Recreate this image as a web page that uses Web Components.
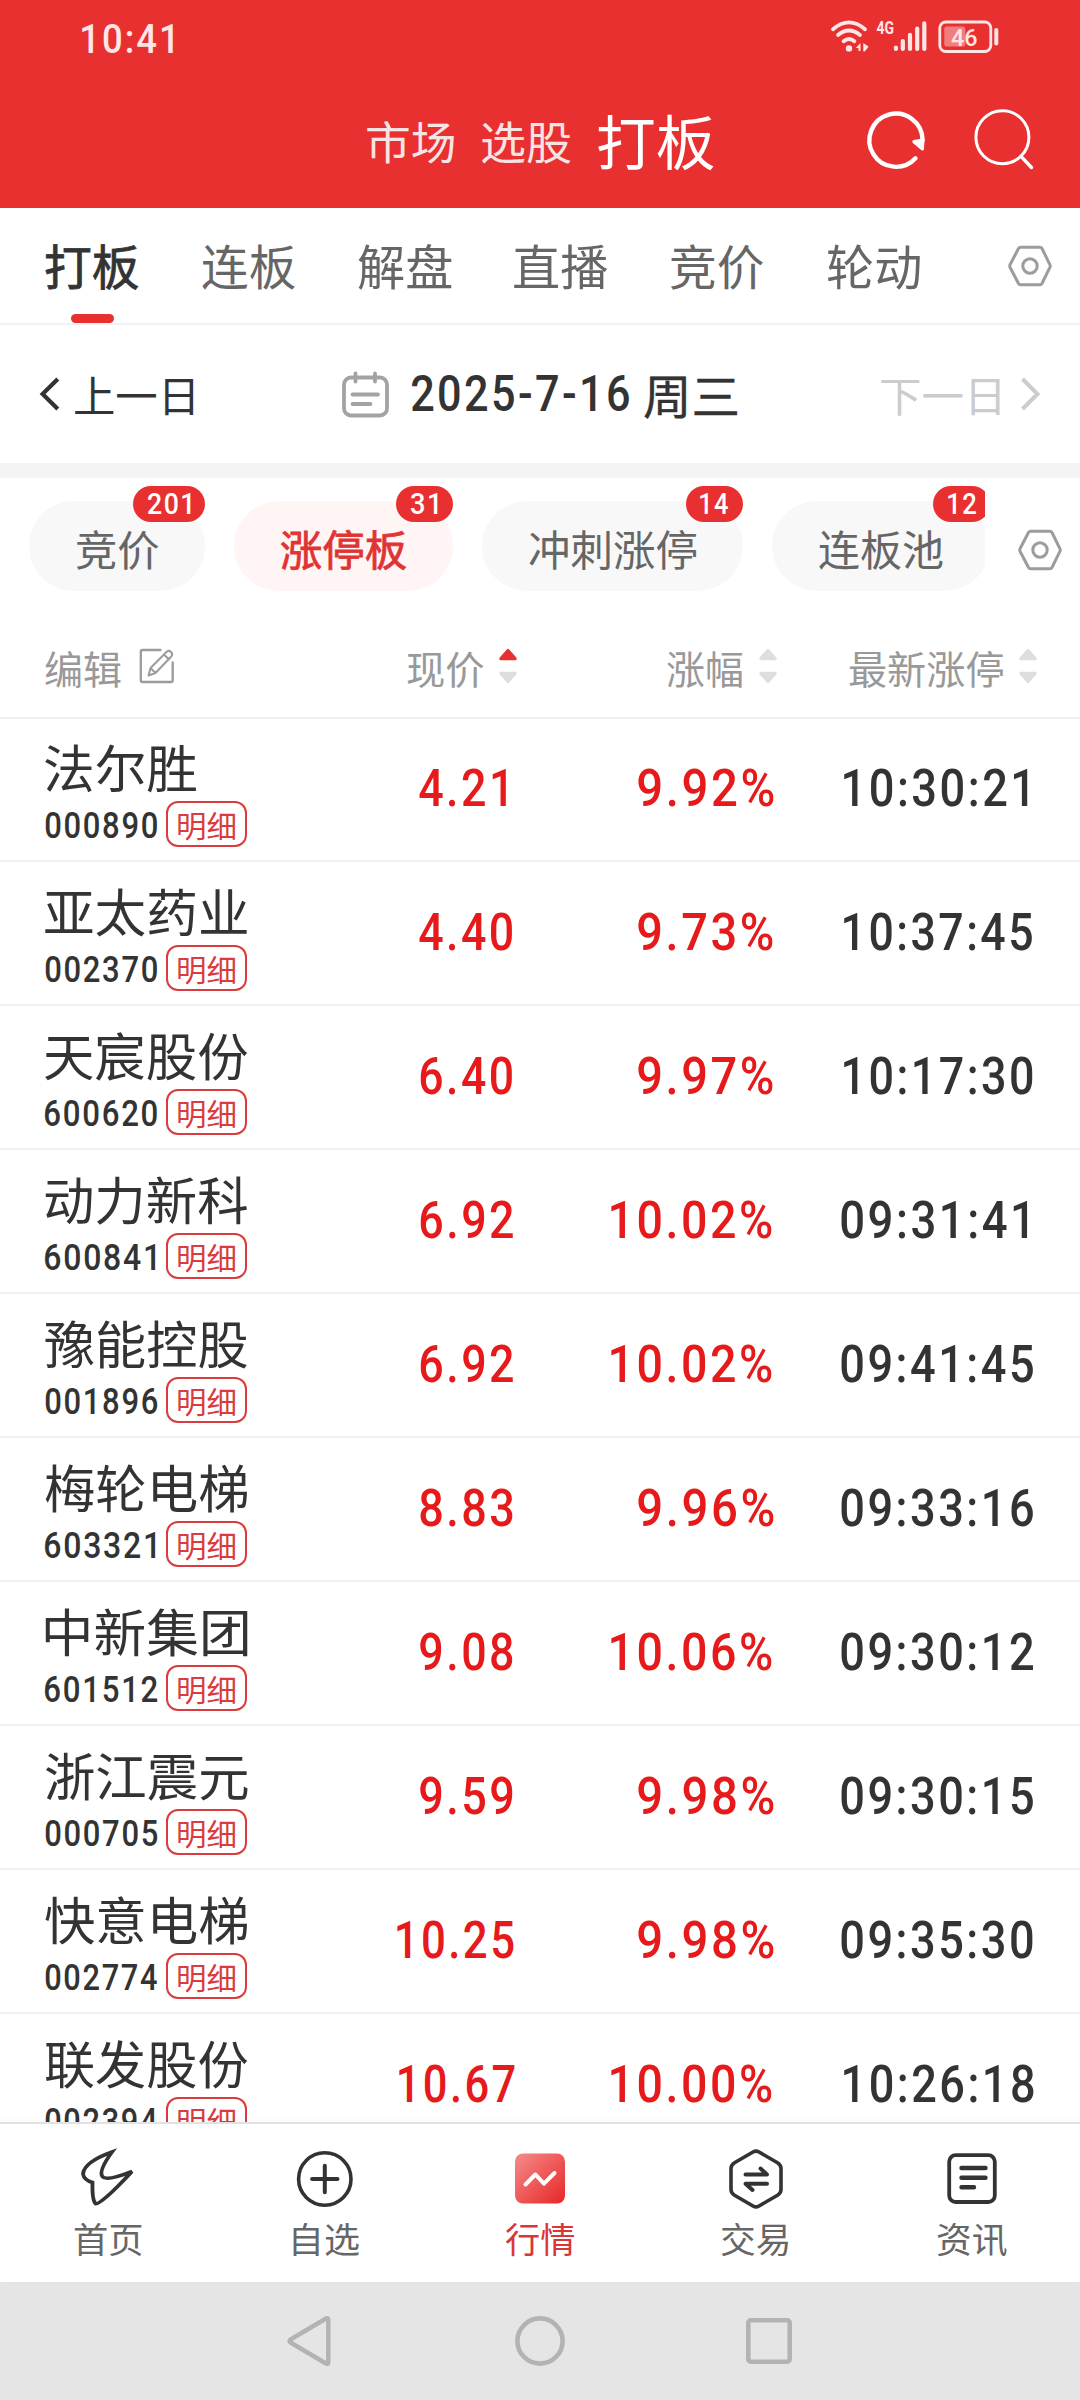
<!DOCTYPE html>
<html lang="zh-CN">
<head>
<meta charset="utf-8">
<title>打板</title>
<style>
  body { margin: 0; width: 1080px; height: 2400px; overflow: hidden; background: #fff; color: #333;
    font-family: Roboto, "Noto Sans CJK SC", sans-serif; }
  market-app { height: 2400px; }
</style>
</head>
<body>
<market-app></market-app>
<script>
const base = '*{box-sizing:border-box} svg{display:block;flex:none}';

function define(name, css, render) {
  customElements.define(name, class extends HTMLElement {
    connectedCallback() {
      if (this.shadowRoot) return;
      const root = this.attachShadow({ mode: 'open' });
      root.innerHTML = `<style>${base}${css}</style>` + render(this);
    }
  });
}

/* A single line of text whose visible ink fills exactly the width given by "w".
   Numbers are tracked out a little so that their figures stay narrow. */
const pen = document.createElement('canvas').getContext('2d');
customElements.define('fit-text', class extends HTMLElement {
  connectedCallback() {
    if (this.shadowRoot) return;
    const w = +this.getAttribute('w'), s = +this.getAttribute('s');
    const weight = this.getAttribute('wt') || 400;
    const text = this.textContent;
    const cjk = /[\u4e00-\u9fff]/.test(text);
    const track = cjk ? 0 : s * 0.055;
    pen.font = `${weight} ${s}px Roboto, "Noto Sans CJK SC", sans-serif`;
    const m = pen.measureText(text);
    const k = w / (m.actualBoundingBoxLeft + m.actualBoundingBoxRight + track * (text.length - 1));
    const x = m.actualBoundingBoxLeft * k, y = s * (cjk ? 0.04 : 0.014);
    this.attachShadow({ mode: 'open' }).innerHTML = `<style>
      :host{display:block;flex:none;width:${w}px;height:${s}px;line-height:${s}px;font-size:${s}px;font-weight:${weight}}
      :host([firm]){-webkit-text-stroke:.8px currentColor}
      span{display:inline-block;white-space:nowrap;letter-spacing:${track}px;transform-origin:0 0;transform:translate(${x}px,${y}px) scaleX(${k})}
      </style><span><slot></slot></span>`;
  }
});

define('status-bar', `:host{display:flex;align-items:center;height:77px;padding-left:82px;background:#e83030;color:#ffe6e6}
  svg{margin-left:auto}`, () => `
  <fit-text w="91.5" s="40.5" wt="500">10:41</fit-text>
  <svg width="250" height="77" viewBox="830 0 250 77" fill="none" stroke="#ffe6e6" stroke-linecap="round">
    <path d="M833 29.2Q849 15.5 865 29.2" stroke-width="3.8"/>
    <path d="M838 35Q849 26 860 35" stroke-width="3.8"/>
    <path d="M843.6 41.3Q849 36.8 854.4 41.3" stroke-width="3.8"/>
    <circle cx="849" cy="48.4" r="3.2" fill="#ffe6e6" stroke="none"/>
    <path d="M860.500 43v8h-2v-3h-2.700zM863.300 43l5.400 3.800-4 4.700h-1.400z" fill="#ffe6e6" stroke="none"/>
    <text x="876.5" y="34.4" textLength="17.5" lengthAdjust="spacingAndGlyphs" font-family="Roboto" font-weight="700" font-size="18.5" fill="#ffe6e6" stroke="none">4G</text>
    <path d="M895.9 47.6V49M902.8 41V49M910 34.8V49M917.2 28.5V49M924.3 23.3V49" stroke-width="4.2"/>
    <rect x="939.8" y="22" width="51" height="29.5" rx="6" stroke-width="2.8"/>
    <rect x="944.3" y="26.5" width="21" height="20" rx="2.5" fill="#fff" fill-opacity=".38" stroke="none"/>
    <path d="M996.3 30v13.5" stroke-width="4"/>
    <text x="951" y="46" textLength="26.500" lengthAdjust="spacingAndGlyphs" font-family="Roboto" font-weight="500" font-size="24.5" fill="#ffe6e6" stroke="none">46</text>
  </svg>`);

define('app-header', `:host{display:flex;align-items:center;height:131px;padding-left:366.500px;background:#e83030;color:#f7e3e3}
  .on{color:#fff;margin-left:-1px} nav{display:flex;align-items:center;gap:28px} svg{margin-left:auto}`, () => `
  <nav><fit-text w="87.5" s="45">市场</fit-text><fit-text w="89" s="45">选股</fit-text><fit-text class="on" w="116.5" s="59">打板</fit-text></nav>
  <svg width="220" height="131" viewBox="860 77 220 131" fill="none" stroke="#fff" stroke-linecap="round">
    <path d="M915.500 158.300A26.600 26.600 0 1 1 922.600 140" stroke-width="4.4"/>
    <path d="M914 141.600L922.800 140.200 922.300 148.800Z" fill="#fff" stroke-width="3.4" stroke-linejoin="round"/>
    <circle cx="1002.4" cy="137.3" r="26.5" stroke-width="3"/><path d="M1021 156.3L1031.500 167.500" stroke-width="3.4"/>
  </svg>`);

define('hex-icon', `:host{display:block;flex:none;width:44px;height:42px}`, () => `
  <svg width="44" height="42" viewBox="0 0 44 42" fill="none" stroke="#9c9c9c" stroke-width="3" stroke-linejoin="round">
  <path d="M12.5 2.3h19.5Q33.3 2.3 34 3.5L42 19.8Q42.5 21 42 22.2L34 38.5Q33.3 39.7 32 39.7H12.5Q11.2 39.7 10.5 38.5L2 22.2Q1.500 21 2 19.800L10.500 3.500Q11.200 2.300 12.500 2.300Z"/><circle cx="22" cy="21" r="7.200"/></svg>`);

define('main-tabs', `:host{display:flex;height:117px;padding:29px 28.500px 0 45px;border-bottom:2px solid #f2f2f2;color:#666}
  nav{display:flex;gap:63px} nav>*{height:60px;display:flex;align-items:center} div{color:#333;position:relative}
  i{position:absolute;left:25.500px;top:77px;width:43px;height:9px;border-radius:5px;background:#e83030}
  hex-icon{margin:8px 0 0 auto}`, () => `
  <nav><div><fit-text firm w="93.500" s="48">打板</fit-text><i></i></div>${['连板','解盘','直播','竞价','轮动'].map(t => `<section><fit-text w="93.300" s="48">${t}</fit-text></section>`).join('')}</nav>
  <hex-icon></hex-icon>`);

define('date-bar', `:host{display:flex;align-items:center;justify-content:space-between;height:153px;padding:0 39px;border-bottom:15px solid #f4f4f4}
  div{display:flex;align-items:center} .next{color:#ccc} .prev fit-text,.next fit-text{margin-top:3px}`, () => `
  <div class="prev"><svg width="35.500" height="36" viewBox="0 0 35.500 36" fill="none" stroke="#333" stroke-width="4.200"><path d="M18.800 3L3.600 18 18.800 33"/></svg>
  <fit-text w="118.500" s="41.500">上一日</fit-text></div>
  <div style="margin-left:5px"><svg width="47" height="48" viewBox="0 0 47 48" fill="none" stroke="#a3a3a3" stroke-width="3.800" stroke-linecap="round"><rect x="2" y="7.500" width="43" height="38" rx="7"/><path d="M13.500 3.500v8M33 3.500v8M10.500 24.500h25.500M10.500 34h18"/></svg>
  <fit-text style="margin-left:22px" w="218.500" s="49.500" wt="500">2025-7-16</fit-text><fit-text firm style="margin-left:15px;margin-top:2px;-webkit-text-stroke-width:.4px" w="93" s="47">周三</fit-text></div>
  <div class="next"><fit-text w="119" s="41.500">下一日</fit-text><svg style="margin-left:19px" width="22" height="36" viewBox="0 0 22 36" fill="none" stroke="#ccc" stroke-width="4"><path d="M3.500 3L18.500 18 3.500 33"/></svg></div>`);

define('filter-pill', `:host{display:flex;flex:none;position:relative;height:90px;padding:7px 47px 0;border-radius:45px;background:#f8f8f8;color:#666;align-items:center}
  :host([active]){background:#fff5f4;color:#e03434}
  b{position:absolute;right:0;top:-15px;height:36px;border-radius:18px;background:#e83030;color:#fff;display:flex;align-items:center;justify-content:center}`, e => `
  <fit-text ${e.hasAttribute('active') ? 'firm' : ''} w="${e.getAttribute('tw')}" s="42">${e.getAttribute('label')}</fit-text>
  <b style="width:${e.getAttribute('bw')}px"><fit-text w="${e.getAttribute('nw')}" s="30" wt="500">${e.getAttribute('count')}</fit-text></b>`);

define('filter-bar', `:host{display:flex;height:113px} div{display:flex;gap:29px;width:985px;padding:23px 0 0 28.500px;overflow:hidden}
  hex-icon{margin:51px 0 0 33px}`, () => `
  <div><filter-pill label="竞价" tw="82.500" count="201" bw="72" nw="43"></filter-pill>
  <filter-pill active label="涨停板" tw="125" count="31" bw="57" nw="27"></filter-pill>
  <filter-pill label="冲刺涨停" tw="167" count="14" bw="57" nw="28.500"></filter-pill>
  <filter-pill label="连板池" tw="124" count="12" bw="57" nw="28"></filter-pill></div><hex-icon></hex-icon>`);

const arrows = up => `<svg width="18" height="36" viewBox="0 0 18 36"><path d="M9 .8Q9.600.8 10.200 1.400L17.500 9.800Q18 12.300 16.500 12.300H1.500Q0 12.300.5 9.800L7.800 1.400Q8.400.8 9 .8Z" fill="${up ? '#e83030' : '#dedede'}"/><path d="M9 35.200Q9.600 35.200 10.200 34.600L17.500 26.200Q18 23.700 16.500 23.700H1.500Q0 23.700.5 26.200L7.800 34.600Q8.400 35.200 9 35.200Z" fill="#dedede"/></svg>`;
define('table-head', `:host{display:grid;grid-template-columns:472.500px 260px 260px;height:128px;padding:30px 43px 0 45px;border-bottom:2px solid #f0f0f0;color:#999}
  :host{grid-template-columns:calc(517px - 45px - 150px) 150px 260px 260px}
  div{display:flex;align-items:center;gap:16px;height:96px;justify-content:flex-end} .edit{gap:18px;justify-content:flex-start} svg{margin-top:-6px}`, () => `
  <div class="edit"><fit-text w="76" s="39">编辑</fit-text><svg width="36" height="36" viewBox="0 0 36 36" fill="none" stroke="#9b9b9b" stroke-width="2.300" stroke-linejoin="round" stroke-linecap="round"><path d="M21.500 2H3.500Q1.800 2 1.800 3.700V32.300Q1.800 34 3.500 34H32Q33.700 34 33.700 32.300V14.500"/><path d="M9.500 27.500L11.500 20 28 3.500Q30 2 32 4Q34.200 6 32.500 8.200L16.500 25Z M25 6.500L30 11.500M11.500 20L16.500 25" stroke-width="2"/></svg></div>
  <div><fit-text w="76.500" s="39">现价</fit-text>${arrows(true)}</div>
  <div><fit-text w="75.800" s="39">涨幅</fit-text>${arrows()}</div>
  <div><fit-text w="154.500" s="39">最新涨停</fit-text>${arrows()}</div>`);

define('stock-row', `:host{display:grid;grid-template-columns:315px 155px 261px 260px;height:144px;padding-left:45px;border-bottom:2px solid #f0f0f0}
  .id{padding-top:24.500px} .code{display:flex;width:202px;height:47px;margin-top:7px;align-items:center}
  .tag{display:flex;align-items:center;justify-content:center;width:81px;height:46px;margin-left:auto;border:2.500px solid #d83c3c;border-radius:12px;color:#d83c3c;padding-top:5px}
  .n{display:flex;justify-content:flex-end;padding-top:43px;color:#e61a1a} .t{color:#333}`, e => {
    const cell = (name, edge, cls = '') => {
      const [text, l, r] = e.getAttribute(name).split(' ');
      return `<div class="n ${cls}"><fit-text style="margin-right:${edge - r}px" w="${r - l}" s="52.500" wt="500">${text}</fit-text></div>`;
    };
    const name = e.getAttribute('name'), code = e.getAttribute('code');
    return `<div class="id"><fit-text w="${name.length === 3 ? 151 : 202.500}" s="51">${name}</fit-text>
      <div class="code"><fit-text w="${/1$/.test(code) ? 110 : 112.5}" s="37" wt="500">${code}</fit-text><span class="tag"><fit-text w="57.500" s="29.500">明细</fit-text></span></div></div>
      ${cell('price', 515)}${cell('change', 776)}${cell('time', 1036, 't')}`;
  });

define('stock-list', `:host{display:block;height:1404px;margin-top:-1px;overflow:hidden}`, () => [
  ['法尔胜','000890','4.21 419 506','9.92% 638 773.8','10:30:21 843.7 1027.3'],
  ['亚太药业','002370','4.40 419 512.7','9.73% 638 772.8','10:37:45 843.7 1031.7'],
  ['天宸股份','600620','6.40 420 512.5','9.97% 638 773','10:17:30 844 1033'],
  ['动力新科','600841','6.92 420 513','10.02% 610.8 771.6','09:31:41 841 1027.3'],
  ['豫能控股','001896','6.92 420 513','10.02% 610.8 771.6','09:41:45 841 1033'],
  ['梅轮电梯','603321','8.83 420 512.5','9.96% 638 773.8','09:33:16 841 1033'],
  ['中新集团','601512','9.08 420 513','10.06% 610.8 771.6','09:30:12 841 1033'],
  ['浙江震元','000705','9.59 420 512.5','9.98% 638 773.8','09:30:15 841 1033'],
  ['快意电梯','002774','10.25 396.5 513','9.98% 638 773.8','09:35:30 841 1033'],
  ['联发股份','002394','10.67 398.8 514.5','10.00% 611 771.7','10:26:18 843.7 1033.7']
].map(r => `<stock-row name="${r[0]}" code="${r[1]}" price="${r[2]}" change="${r[3]}" time="${r[4]}"></stock-row>`).join(''));

const icons = [
  '<path d="M36 5Q8 15 7 27Q8 33 16.500 35.500Q16 53 19.500 56.500Q24 59 56 24.500Q29 35 26 29Q23 23 36 5Z" stroke-width="3.800" stroke-linejoin="miter"/>',
  '<circle cx="32.800" cy="32" r="26.200" stroke-width="3.600"/><path d="M32.800 18.800v26.400M20.100 32h25.400" stroke-width="4"/>',
  '<defs><linearGradient id="g" x1="0" y1="0" x2="1" y2="1"><stop stop-color="#f48c8c"/><stop offset="1" stop-color="#e92626"/></linearGradient></defs><rect x="7" y="6.500" width="50" height="50" rx="8" fill="url(#g)" stroke="none"/><path d="M17.500 37.500L27.400 27.500 35.900 36.700 46.500 26" stroke="#fff" stroke-width="4"/>',
  '<path d="M29 5Q32 3.200 35 5L53.500 15.800Q57 18 57 21.500V42.500Q57 46 53.500 48.200L35 59Q32 60.800 29 59L10.500 48.200Q7 46 7 42.500V21.500Q7 18 10.500 15.800Z" stroke-width="3.600"/><path d="M21.500 27.500H43L36.500 21.500M43 36.800H21.500L28.500 43" stroke-width="4"/>',
  '<rect x="9.200" y="8.200" width="45.600" height="46.800" rx="6.500" stroke-width="3.800"/><path d="M21.500 21h24M21.500 30.700h24M21.500 40.200h12.500" stroke-width="4.400"/>'
];
define('bottom-item', `:host{display:flex;flex-direction:column;align-items:center;width:216px;color:#666;padding-top:23px}
  :host([active]){color:#d93636} fit-text{margin-top:12px}`, e => `
  <svg width="64" height="64" viewBox="0 0 64 64" fill="none" stroke="#333" stroke-linecap="round" stroke-linejoin="round">${icons[e.getAttribute('icon')]}</svg>
  <fit-text w="${e.getAttribute('tw')}" s="35" style="margin-left:${e.getAttribute('dx') || 0}px">${e.getAttribute('label')}</fit-text>`);
define('bottom-bar', `:host{display:flex;height:160px;border-top:2px solid #e2e2e2;background:#fff;box-shadow:0 -2px 6px #00000008;position:relative}`, () => `
  <bottom-item icon="0" label="首页" tw="67.500"></bottom-item><bottom-item icon="1" label="自选" tw="66" dx="3"></bottom-item>
  <bottom-item icon="2" label="行情" tw="69.500"  active></bottom-item><bottom-item icon="3" label="交易" tw="67.500" dx="-3"></bottom-item><bottom-item icon="4" label="资讯" tw="69.500"></bottom-item>`);

define('system-nav', `:host{display:flex;justify-content:center;align-items:center;height:118px;background:#e5e5e5;gap:182px}`, () => `
  <svg width="46" height="54" viewBox="1 0 46 54" fill="none" stroke="#b3b3b3" stroke-width="4.400" stroke-linejoin="round"><path d="M42.300 5.500Q42.300 3.400 40 4.500L4.500 25.500Q2.500 27 4.500 28.500L40 49.500Q42.300 50.600 42.300 48.500Z"/></svg>
  <svg width="50" height="50" viewBox="0 0 50 50" fill="none" stroke="#b3b3b3" stroke-width="4.600"><circle cx="25" cy="25" r="22.600"/></svg>
  <svg width="46" height="46" viewBox="1 0 46 46" overflow="visible" fill="none" stroke="#b3b3b3" stroke-width="4.600"><rect x="2.300" y="2.300" width="41.400" height="41.400" rx="2.500"/></svg>`);

define('market-app', `:host{display:flex;flex-direction:column} :host>*{flex:none}`, () => `
  <status-bar></status-bar><app-header></app-header><main-tabs></main-tabs><date-bar></date-bar><filter-bar></filter-bar>
  <table-head></table-head><stock-list></stock-list><bottom-bar></bottom-bar><system-nav></system-nav>`);
</script>
</body>
</html>
